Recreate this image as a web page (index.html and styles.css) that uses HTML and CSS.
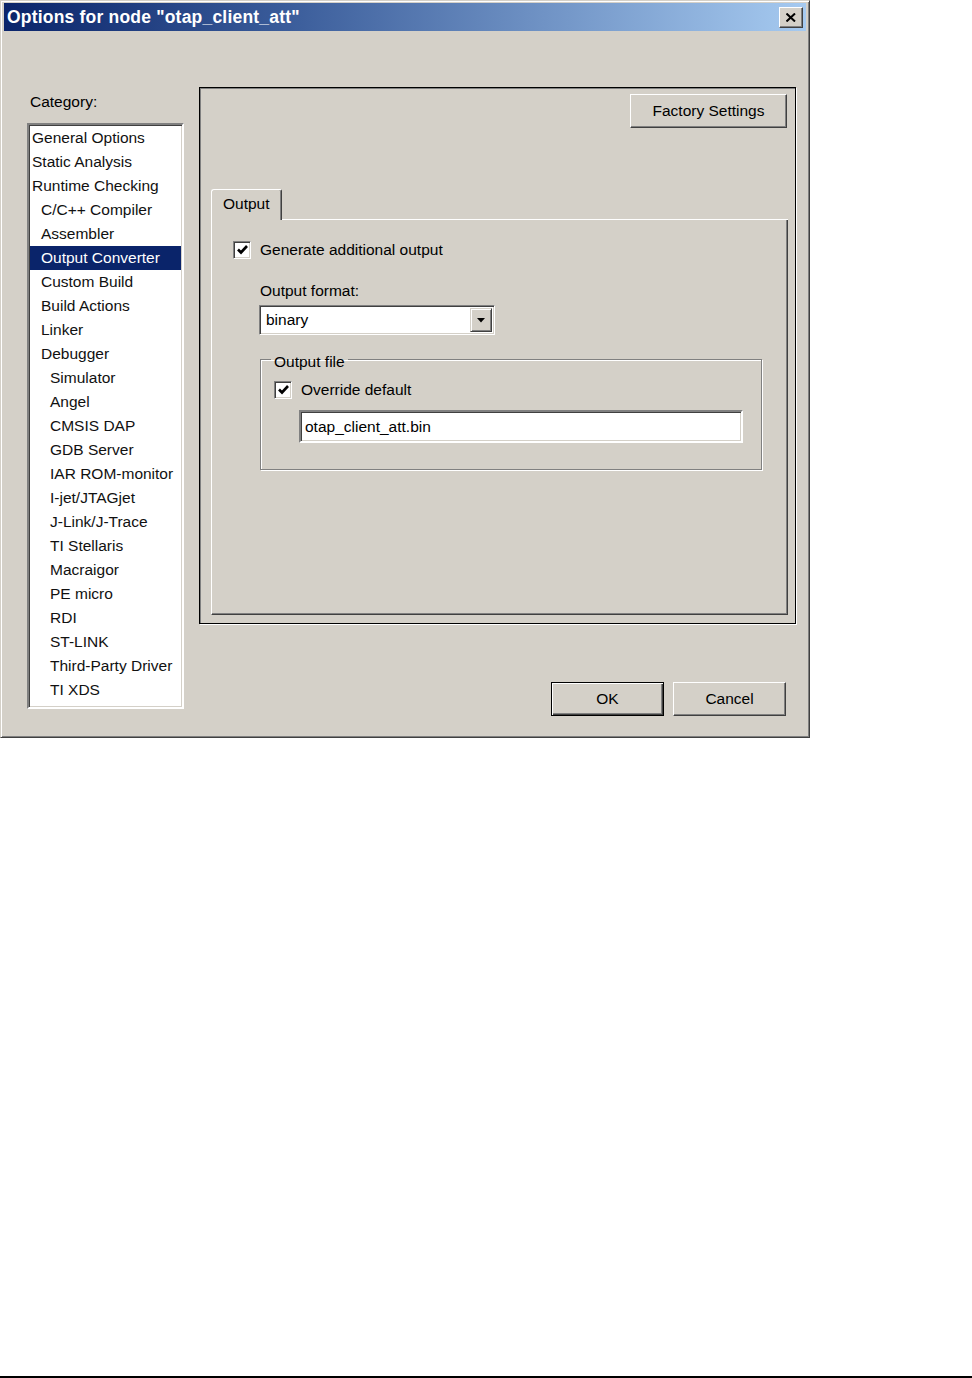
FILE: index.html
```html
<!DOCTYPE html>
<html lang="en">
<head>
    <meta charset="UTF-8">
    <title>Options for node "otap_client_att"</title>
    <link rel="stylesheet" href="styles.css">
</head>
<body>
    <div class="screen">
        <div class="dialog">
            <div class="titlebar">
                <span class="title">Options for node "otap_client_att"</span>
                <button class="close" aria-label="Close">
                    <svg width="10" height="9" viewBox="0 0 10 9">
                        <path d="M0.5 0.5 L9 8.5 M9 0.5 L0.5 8.5" stroke="#000" stroke-width="2" fill="none"/>
                    </svg>
                </button>
            </div>

            <div class="dialog-body">
                <div class="category">
                    <div class="category-label">Category:</div>
                    <ul class="listbox">
                        <li class="lvl0">General Options</li>
                        <li class="lvl0">Static Analysis</li>
                        <li class="lvl0">Runtime Checking</li>
                        <li class="lvl1">C/C++ Compiler</li>
                        <li class="lvl1">Assembler</li>
                        <li class="lvl1 selected">Output Converter</li>
                        <li class="lvl1">Custom Build</li>
                        <li class="lvl1">Build Actions</li>
                        <li class="lvl1">Linker</li>
                        <li class="lvl1">Debugger</li>
                        <li class="lvl2">Simulator</li>
                        <li class="lvl2">Angel</li>
                        <li class="lvl2">CMSIS DAP</li>
                        <li class="lvl2">GDB Server</li>
                        <li class="lvl2">IAR ROM-monitor</li>
                        <li class="lvl2">I-jet/JTAGjet</li>
                        <li class="lvl2">J-Link/J-Trace</li>
                        <li class="lvl2">TI Stellaris</li>
                        <li class="lvl2">Macraigor</li>
                        <li class="lvl2">PE micro</li>
                        <li class="lvl2">RDI</li>
                        <li class="lvl2">ST-LINK</li>
                        <li class="lvl2">Third-Party Driver</li>
                        <li class="lvl2">TI XDS</li>
                    </ul>
                </div>

                <div class="main">
                    <div class="frame">
                        <div class="frame-top">
                            <button class="btn btn-factory">Factory Settings</button>
                        </div>

                        <div class="tabs">
                            <div class="tab">Output</div>
                            <div class="tab-fill"></div>
                        </div>

                        <div class="tab-panel">
                            <label class="check-row">
                                <span class="checkbox">
                                    <svg width="11" height="10" viewBox="0 0 11 10">
                                        <path d="M1 4.5 L4 7.5 L10 1" stroke="#000" stroke-width="2.6" fill="none"/>
                                    </svg>
                                </span>
                                <span>Generate additional output</span>
                            </label>

                            <div class="options">
                                <div class="field-label">Output format:</div>
                                <div class="combo">
                                    <span class="combo-value">binary</span>
                                    <span class="combo-btn">
                                        <svg width="8" height="5" viewBox="0 0 8 5">
                                            <path d="M0 0 H8 L4 4.5 Z" fill="#000"/>
                                        </svg>
                                    </span>
                                </div>

                                <fieldset class="group">
                                    <legend>Output file</legend>
                                    <label class="check-row check-row-small">
                                        <span class="checkbox">
                                            <svg width="11" height="10" viewBox="0 0 11 10">
                                                <path d="M1 4.5 L4 7.5 L10 1" stroke="#000" stroke-width="2.6" fill="none"/>
                                            </svg>
                                        </span>
                                        <span>Override default</span>
                                    </label>
                                    <div class="textbox">otap_client_att.bin</div>
                                </fieldset>
                            </div>
                        </div>
                    </div>

                    <div class="actions">
                        <button class="btn btn-default">OK</button>
                        <button class="btn">Cancel</button>
                    </div>
                </div>
            </div>
        </div>

        <div class="bottom-rule"></div>
    </div>
</body>
</html>
```

FILE: styles.css
```css
* {
    margin: 0;
    padding: 0;
    box-sizing: border-box;
}

body {
    background: #fff;
    font-family: 'Liberation Sans', Arial, sans-serif;
    font-size: 15.5px;
    color: #000;
}

.screen {
    height: 1378px;
    display: flex;
    flex-direction: column;
    overflow: hidden;
}

/* Dialog window */
.dialog {
    width: 810px;
    height: 738px;
    background: #d4d0c8;
    border: 1px solid;
    border-color: #d4d0c8 #404040 #404040 #d4d0c8;
    box-shadow: inset 1px 1px 0 #fff, inset -1px -1px 0 #808080;
    padding: 2px 3px 3px 3px;
    display: flex;
    flex-direction: column;
}

.titlebar {
    height: 28px;
    background: linear-gradient(90deg, #0a246a 0%, #3a5c9a 35%, #a6caf0 100%);
    display: flex;
    align-items: center;
    justify-content: space-between;
    padding: 0 3px 0 3px;
}

.title {
    color: #fff;
    font-weight: bold;
    font-size: 17.5px;
    letter-spacing: 0.2px;
    white-space: nowrap;
}

.close {
    width: 24px;
    height: 21px;
    margin-top: 1px;
    background: #d4d0c8;
    border: 1px solid;
    border-color: #fff #404040 #404040 #fff;
    box-shadow: inset -1px -1px 0 #808080;
    display: flex;
    align-items: center;
    justify-content: center;
}

/* Body */
.dialog-body {
    flex: 1;
    display: flex;
    padding-top: 56px;
}

.category {
    margin-left: 23px;
    padding-top: 6px;
    width: 157px;
}

.category-label {
    line-height: 18px;
    padding-left: 3px;
    margin-bottom: 12px;
}

.listbox {
    list-style: none;
    height: 586px;
    background: #fff;
    border: 2px solid;
    border-color: #808080 #fff #fff #808080;
    box-shadow: inset 1px 1px 0 #404040, inset -1px -1px 0 #d4d0c8;
    padding: 1px 1px;
    overflow: hidden;
}

.listbox li {
    height: 24px;
    line-height: 24px;
    white-space: nowrap;
    color: #111;
}

.listbox .lvl0 { padding-left: 2px; }
.listbox .lvl1 { padding-left: 11px; }
.listbox .lvl2 { padding-left: 20px; }

.listbox .selected {
    background: #0a246a;
    color: #fff;
}

.main {
    margin-left: 15px;
    width: 597px;
    display: flex;
    flex-direction: column;
}

/* Outer frame */
.frame {
    height: 537px;
    border: 1px solid #000;
    box-shadow: inset 1px 1px 0 #808080, 1px 1px 0 #fff;
    padding: 6px 7px 8px 11px;
    display: flex;
    flex-direction: column;
}

.frame-top {
    display: flex;
    justify-content: flex-end;
    padding-right: 1px;
}

.btn {
    font-family: inherit;
    font-size: 15.5px;
    color: #000;
    background: #d4d0c8;
    height: 34px;
    border: 1px solid;
    border-color: #fff #404040 #404040 #fff;
    box-shadow: inset -1px -1px 0 #808080;
}

.btn-factory {
    width: 157px;
}

/* Tabs */
.tabs {
    margin-top: 61px;
    height: 31px;
    display: flex;
    align-items: stretch;
}

.tab {
    width: 71px;
    line-height: 28px;
    padding-left: 11px;
    border-left: 1px solid #fff;
    border-top: 1px solid #fff;
    border-right: 1px solid #404040;
    border-top-left-radius: 3px;
    border-top-right-radius: 2px;
    box-shadow: inset -1px 0 0 #808080;
}

.tab-fill {
    flex: 1;
    border-bottom: 1px solid #fff;
}

.tab-panel {
    flex: 1;
    border-left: 1px solid #fff;
    border-right: 1px solid #404040;
    border-bottom: 1px solid #404040;
    box-shadow: inset -1px -1px 0 #808080;
    padding: 21px 0 0 21px;
}

.check-row {
    display: flex;
    align-items: center;
    gap: 9px;
    line-height: 18px;
}

.checkbox {
    width: 18px;
    height: 18px;
    background: #fff;
    border: 1px solid;
    border-color: #808080 #fff #fff #808080;
    box-shadow: inset 1px 1px 0 #404040, inset -1px -1px 0 #d4d0c8;
    display: flex;
    align-items: center;
    justify-content: center;
}

.options {
    padding-left: 27px;
}

.field-label {
    margin-top: 23px;
    line-height: 18px;
}

.combo {
    margin: 5px 0 0 -1px;
    width: 236px;
    height: 30px;
    background: #fff;
    border: 1px solid;
    border-color: #808080 #fff #fff #808080;
    box-shadow: inset 1px 1px 0 #404040, inset -1px -1px 0 #d4d0c8;
    padding: 2px 2px 2px 6px;
    display: flex;
    align-items: center;
    justify-content: space-between;
}

.combo-btn {
    width: 22px;
    height: 24px;
    background: #d4d0c8;
    border: 1px solid;
    border-color: #d4d0c8 #404040 #404040 #d4d0c8;
    box-shadow: inset 1px 1px 0 #fff, inset -1px -1px 0 #808080;
    display: flex;
    align-items: center;
    justify-content: center;
}

/* Group box */
.group {
    margin-top: 12px;
    width: 502px;
    border: 1px solid #808080;
    box-shadow: 1px 1px 0 #fff, inset 1px 1px 0 #fff;
    padding: 10px 12px 26px 13px;
}

.group legend {
    padding: 6px 3px 0 3px;
    margin-left: -3px;
    line-height: 18px;
}

.textbox {
    margin: 11px 0 0 25px;
    width: 444px;
    height: 33px;
    line-height: 29px;
    background: #fff;
    border: 2px solid;
    border-color: #808080 #fff #fff #808080;
    box-shadow: inset 1px 1px 0 #404040, inset -1px -1px 0 #d4d0c8;
    padding-left: 4px;
}

/* Dialog buttons */
.actions {
    margin-top: 58px;
    padding-right: 10px;
    display: flex;
    justify-content: flex-end;
    gap: 9px;
}

.actions .btn {
    width: 113px;
}

.btn-default {
    border: 1px solid #000;
    box-shadow: inset 1px 1px 0 #fff, inset -1px -1px 0 #404040, inset -2px -2px 0 #808080;
}

.bottom-rule {
    margin-top: auto;
    height: 2px;
    background: #000;
}
```
